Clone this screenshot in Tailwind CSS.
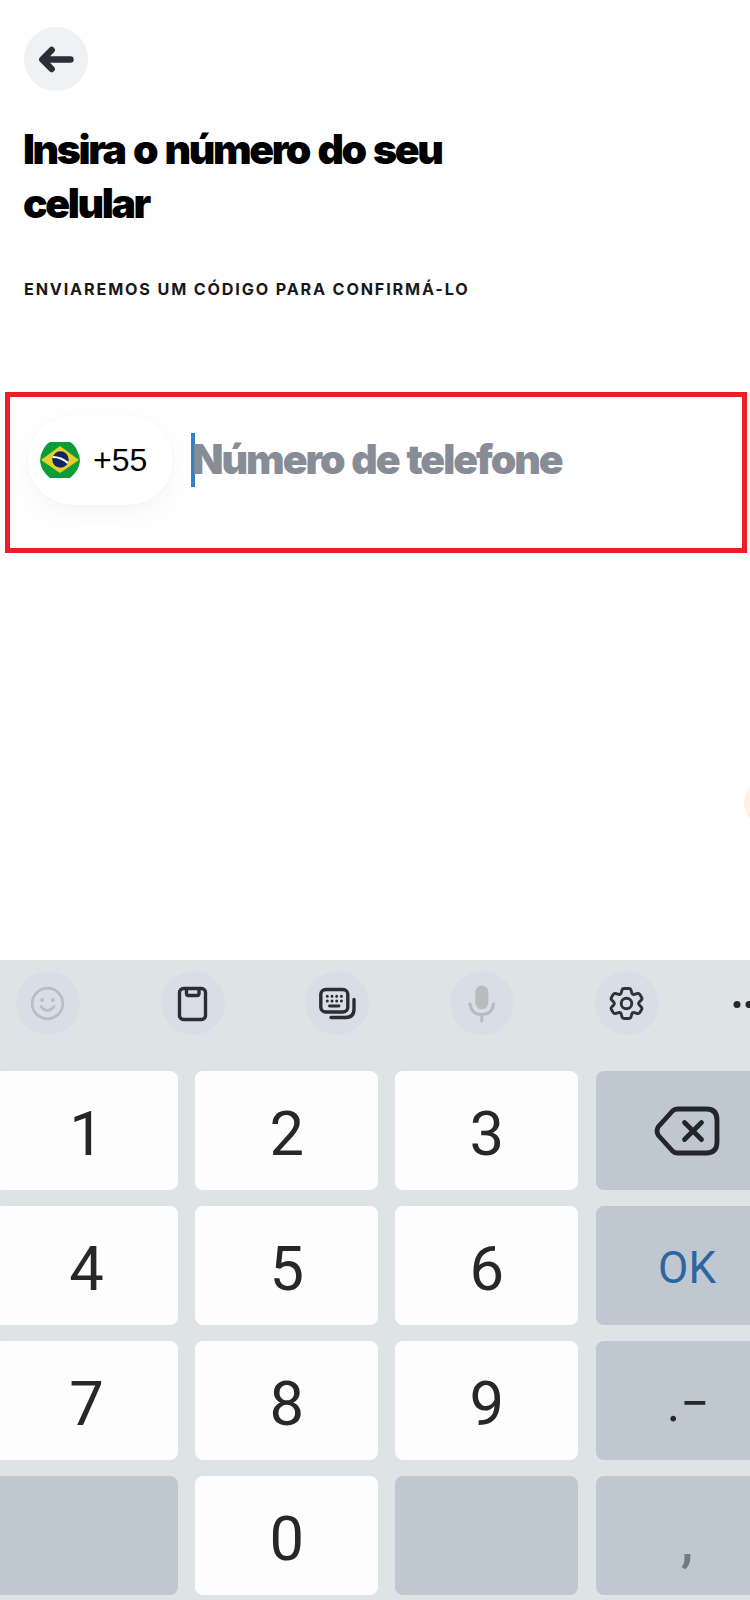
<!DOCTYPE html>
<html lang="pt-BR">
<head>
<meta charset="utf-8">
<title>Número do celular</title>
<script src="https://cdn.jsdelivr.net/npm/@tailwindcss/browser@4"></script>
</head>
<body class="bg-[#fefefe]">
<div class="relative flex h-[1600px] w-[750px] flex-col overflow-hidden bg-[#fefefe] font-['Inter',sans-serif]">
  <main class="flex h-[960px] flex-col pt-[27px]">
    <button class="ml-[23.500px] flex size-16 items-center justify-center rounded-full bg-[#f0f1f3]" aria-label="Voltar">
      <svg class="size-16" viewBox="0 0 64 64" fill="none" stroke="#2c2d37" stroke-width="6.400" stroke-linecap="round" stroke-linejoin="round"><path d="M46.500 32.500H18.500M27.700 23 18.300 32.500l9.400 9.500"/></svg>
    </button>
    <h1 class="mt-[31px] ml-[23px] h-[108px] text-[41px] leading-[54px] font-black tracking-[-2.400px] whitespace-nowrap text-black [word-spacing:2.600px]">Insira o número do seu<br>celular</h1>
    <p class="mt-[47px] ml-6 h-6 text-[16.200px] leading-6 font-bold tracking-[1.830px] whitespace-nowrap text-[#18181b]">ENVIAREMOS UM CÓDIGO PARA CONFIRMÁ-LO</p>
    <section class="mt-[91px] ml-[5px] flex h-[161px] w-[742px] items-start border-[5px] border-[#ee1c25] pt-[18px] pl-[18px]">
      <div class="flex h-[90px] w-[145px] items-center rounded-full bg-white pl-[12px] shadow-[0_10px_20px_rgba(0,0,0,0.03),0_0_3px_rgba(0,0,0,0.04)]">
        <svg class="h-[38px] w-10 shrink-0" viewBox="0 0 40 38"><defs><clipPath id="flag"><path d="M10 1H30Q34 3 37 9Q40 15 40 20Q39 30 30 37H10Q1 30 0 20Q0 14 3 9Q6 3 10 1Z"/></clipPath></defs><g clip-path="url(#flag)"><path fill="#0b9c37" d="M0 0h40v38H0z"/><path fill="#e6cf2b" d="M1 19 20 5l19 14-19 13z"/><circle cx="20.500" cy="18.500" r="8.200" fill="#12265f"/><path d="M13 16q8 0 15 6" fill="none" stroke="#fff" stroke-width="2.200"/></g></svg>
        <span class="ml-[13px] font-['Liberation_Sans',sans-serif] text-[32px] leading-10 text-black">+55</span>
      </div>
      <div class="mt-[18px] ml-[18px] h-[54px] w-1 shrink-0 bg-[#3280c9]"></div>
      <span class="mt-[17px] ml-[-3px] text-[41px] leading-[54px] font-black tracking-[-2.050px] whitespace-nowrap text-[#878c96] [word-spacing:1.700px]">Número de telefone</span>
    </section>
  </main>
  <div class="absolute top-[780px] left-[744px] h-[46px] w-[46px] rounded-full bg-[#fff0e6]"></div>

  <div class="h-[640px] w-[780px] bg-[#dee3e6]">
    <div class="flex h-[111px] gap-[80.700px] pt-[11px] pl-[16px]">
      <svg class="size-16 shrink-0 rounded-full bg-[#d9dee6]" viewBox="0 0 64 64" fill="none" stroke="#b9bdc4" stroke-width="2.700" stroke-linecap="round"><circle cx="31.500" cy="32.500" r="15.300"/><path d="M25 35.500q6.500 8 13 0"/><circle cx="26.200" cy="29" r="2" fill="#b9bdc4" stroke="none"/><circle cx="36.800" cy="29" r="2" fill="#b9bdc4" stroke="none"/></svg>
      <svg class="size-16 shrink-0 rounded-full bg-[#d9dee6]" viewBox="0 0 64 64" fill="none" stroke="#2a2d31" stroke-width="3.400" stroke-linejoin="round"><rect x="18.500" y="17.500" width="26" height="31" rx="4"/><path d="M25.500 17.500v5q0 2 2 2h8.500q2 0 2-2v-5"/></svg>
      <svg class="size-16 shrink-0 rounded-full bg-[#d9dee6]" viewBox="0 0 64 64" fill="none" stroke="#2a2d31" stroke-width="3.400" stroke-linecap="round"><rect x="15.800" y="18.500" width="27" height="22.500" rx="5"/><path d="M49 28.500v9.500q0 8.500-8.500 8.500H26"/><path d="M24.500 35h9.500" stroke-width="2.900"/><path d="M22.300 25.200h.01M27 25.200h.01M31.700 25.200h.01M36.400 25.200h.01M22.300 29.900h.01M27 29.900h.01M31.700 29.900h.01M36.400 29.900h.01" stroke-width="3"/></svg>
      <svg class="size-16 shrink-0 rounded-full bg-[#d9dee6]" viewBox="0 0 64 64" fill="none" stroke="#b8bcbf" stroke-width="3" stroke-linecap="round"><rect x="25.300" y="14.500" width="13" height="24" rx="6.500" fill="#b8bcbf" stroke="none"/><path d="M20 33q1.500 10.500 11.800 10.500T43.500 33M31.800 43.500v6.500"/></svg>
      <svg class="size-16 shrink-0 rounded-full bg-[#d9dee6]" viewBox="0 0 64 64" fill="none" stroke="#2f3338" stroke-width="2.900" stroke-linejoin="round"><circle cx="31.500" cy="32.500" r="5.300"/><path d="M29 17.500h5q1.500 0 2 1.500l.8 3q.6 1.800 2.500 1.300l3.200-.8q1.500-.4 2.300.9l1.800 3.100q.8 1.400-.3 2.500l-1.900 1.900q-1.500 1.600 0 3.200l1.900 1.900q1.100 1.100.3 2.500l-1.800 3.100q-.8 1.300-2.300.9l-3.200-.8q-1.900-.5-2.500 1.300l-.8 3q-.5 1.500-2 1.500h-5q-1.500 0-2-1.500l-.8-3q-.6-1.800-2.500-1.300l-3.200.8q-1.500.4-2.300-.9l-1.800-3.100q-.8-1.400.3-2.500l1.900-1.900q1.500-1.600 0-3.200l-1.900-1.900q-1.100-1.100-.3-2.500l1.800-3.100q.8-1.300 2.300-.9l3.200.8q1.900.5 2.500-1.300l.8-3q.5-1.500 2-1.500z"/></svg>
      <svg class="ml-[-6px] h-16 w-6 shrink-0" viewBox="0 0 24 64" fill="#25282c"><circle cx="4" cy="33.500" r="3.500"/><circle cx="16" cy="33.500" r="3.500"/></svg>
    </div>
    <div class="ml-[-5px] grid grid-cols-[183px_183px_183px_183px] grid-rows-[119px_119px_119px_119px] gap-x-[17.200px] gap-y-[16px] font-['Roboto',sans-serif] text-[61.500px] leading-none text-[#262728] *:flex *:items-center *:justify-center *:rounded-[8px]">
      <div class="bg-[#fdfdfe] pt-[9px]">1</div>
      <div class="bg-[#fdfdfe] pt-[9px]">2</div>
      <div class="bg-[#fdfdfe] pt-[9px]">3</div>
      <div class="bg-[#bfc7d1]"><svg class="h-[52px] w-[68px]" viewBox="0 0 68 52" fill="none" stroke="#222529" stroke-width="4.800" stroke-linecap="round" stroke-linejoin="round"><path d="M24.500 4H53.500Q64 4 64 15V37Q64 48 53.500 48H24.500Q21.500 48 19.500 46L5.500 30.500Q2.500 26 5.500 21.500L19.500 6Q21.500 4 24.500 4Z"/><path d="m31.500 17.500 17 17M48.500 17.500l-17 17"/></svg></div>
      <div class="bg-[#fdfdfe] pt-[9px]">4</div>
      <div class="bg-[#fdfdfe] pt-[9px]">5</div>
      <div class="bg-[#fdfdfe] pt-[9px]">6</div>
      <div class="bg-[#bfc7d1] pt-[5px] text-[44px] text-[#2d65a0]">OK</div>
      <div class="bg-[#fdfdfe] pt-[9px]">7</div>
      <div class="bg-[#fdfdfe] pt-[9px]">8</div>
      <div class="bg-[#fdfdfe] pt-[9px]">9</div>
      <div class="bg-[#bfc7d1] pt-[6px] pl-[2px] text-[51px]"><span>.</span><span>−</span></div>
      <div class="bg-[#bfc7d1]"></div>
      <div class="bg-[#fdfdfe] pt-[9px]">0</div>
      <div class="bg-[#bfc7d1]"></div>
      <div class="bg-[#bfc7d1] pt-[10px] text-[56px] font-medium text-[#747a82]">,</div>
    </div>
  </div>
</div>
</body>
</html>
